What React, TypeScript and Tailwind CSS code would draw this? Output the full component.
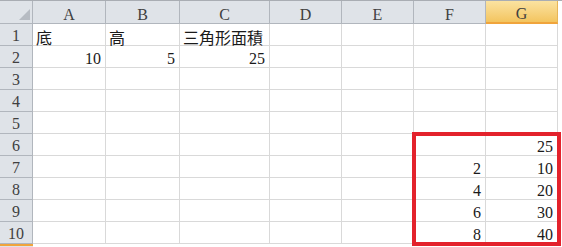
import React from "react";

const cols = ["A", "B", "C", "D", "E", "F", "G"];
const widths = ["w-[73px]", "w-[74px]", "w-[90px]", "w-[72px]", "w-[72px]", "w-[72px]", "w-[72px]"];

type Cell = { v: string; right?: boolean };
const data: Record<number, Record<string, Cell>> = {
  1: { A: { v: "底" }, B: { v: "高" }, C: { v: "三角形面積" } },
  2: { A: { v: "10", right: true }, B: { v: "5", right: true }, C: { v: "25", right: true } },
  6: { G: { v: "25", right: true } },
  7: { F: { v: "2", right: true }, G: { v: "10", right: true } },
  8: { F: { v: "4", right: true }, G: { v: "20", right: true } },
  9: { F: { v: "6", right: true }, G: { v: "30", right: true } },
  10: { F: { v: "8", right: true }, G: { v: "40", right: true } },
};

const font = { fontFamily: '"Liberation Serif", "Noto Sans CJK TC", serif' };
const cjk = { fontFamily: '"Noto Sans CJK TC", "Liberation Sans", sans-serif' };

export default function App() {
  const rows = [1, 2, 3, 4, 5, 6, 7, 8, 9, 10];
  return (
    <div className="relative w-[562px] h-[247px] overflow-hidden bg-white" style={font}>
      <div className="flex flex-col border-t border-[#a9adb3]">
        {/* header row */}
        <div className="flex h-[23px]">
          <div className="w-[33px] h-full bg-[#dfe3e8] border-r border-b border-[#b1b6bd] flex items-end justify-end pr-[2px] pb-[3px]">
            <svg width="11" height="11" viewBox="0 0 11 11">
              <polygon points="11,0 11,11 0,11" fill="#b6bbc2" />
            </svg>
          </div>
          {cols.map((c, i) =>
            c === "G" ? (
              <div
                key={c}
                className={`${widths[i]} h-full bg-gradient-to-b from-[#fbe3a0] to-[#f3c45e] border-r border-b-2 border-r-[#e8b557] border-b-[#f0a43c] flex items-center justify-center pt-[4px] text-[16px] text-[#404040] leading-none`}
              >
                {c}
              </div>
            ) : (
              <div
                key={c}
                className={`${widths[i]} h-full bg-[#dfe3e8] border-r border-b border-[#b1b6bd] flex items-center justify-center pt-[5px] text-[16px] text-[#404040] leading-none`}
              >
                {c}
              </div>
            )
          )}
        </div>
        {rows.map((r) => (
          <div key={r} className="flex h-[22px]">
            <div className="w-[33px] h-full bg-[#dfe3e8] border-r border-b border-[#b1b6bd] flex items-end justify-center text-[16px] leading-[16px] text-[#404040] pb-[1px]">
              {r}
            </div>
            {cols.map((c, i) => {
              const cell = data[r]?.[c];
              return (
                <div
                  key={c}
                  className={`${widths[i]} h-full border-r border-b border-[#d9d9d9] flex items-end overflow-visible whitespace-nowrap text-[16px] leading-[16px] text-[#1a1a1a] ${
                    cell?.right ? "justify-end pr-[4px] pb-[0px]" : "justify-start pl-[3px]"
                  }`}
                  style={cell && !cell.right ? cjk : undefined}
                >
                  {cell?.v}
                </div>
              );
            })}
          </div>
        ))}
        <div className="flex h-[4px]">
          <div className="w-[33px] h-full bg-[#dfe3e8] border-t-2 border-[#f0a43c]" />
        </div>
      </div>
      <div className="absolute left-[412px] top-[132px] w-[149px] h-[114px] border-4 border-[#e3222c]" />
    </div>
  );
}
